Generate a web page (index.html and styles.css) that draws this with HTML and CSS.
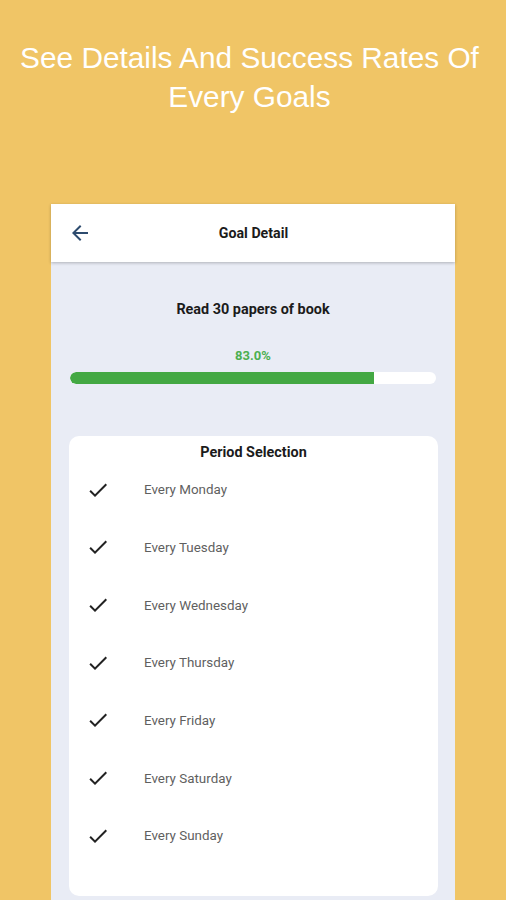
FILE: index.html
```html
<!DOCTYPE html>
<html>
<head>
<meta charset="utf-8">
<link rel="stylesheet" href="styles.css">
</head>
<body>
<div class="page">
  <h1 class="headline">See Details And Success Rates Of<br>Every Goals</h1>
  <div class="phone">
    <div class="appbar">
      <svg class="back" viewBox="0 0 24 24" width="24" height="24"><path d="M20 11H7.83l5.59-5.59L12 4l-8 8 8 8 1.41-1.41L7.83 13H20v-2z"/></svg>
      <div class="appbar-title">Goal Detail</div>
    </div>
    <div class="content">
      <div class="goal-name">Read 30 papers of book</div>
      <div class="percent">83.0%</div>
      <div class="track"><div class="fill" style="width:83%"></div></div>
      <div class="card">
        <div class="card-title">Period Selection</div>
        <div class="row"><svg class="check" viewBox="0 0 24 24" width="24" height="24"><path d="M9 16.17L4.83 12l-1.42 1.41L9 19 21 7l-1.41-1.41z"/></svg><span class="label">Every Monday</span></div>
        <div class="row"><svg class="check" viewBox="0 0 24 24" width="24" height="24"><path d="M9 16.17L4.83 12l-1.42 1.41L9 19 21 7l-1.41-1.41z"/></svg><span class="label">Every Tuesday</span></div>
        <div class="row"><svg class="check" viewBox="0 0 24 24" width="24" height="24"><path d="M9 16.17L4.83 12l-1.42 1.41L9 19 21 7l-1.41-1.41z"/></svg><span class="label">Every Wednesday</span></div>
        <div class="row"><svg class="check" viewBox="0 0 24 24" width="24" height="24"><path d="M9 16.17L4.83 12l-1.42 1.41L9 19 21 7l-1.41-1.41z"/></svg><span class="label">Every Thursday</span></div>
        <div class="row"><svg class="check" viewBox="0 0 24 24" width="24" height="24"><path d="M9 16.17L4.83 12l-1.42 1.41L9 19 21 7l-1.41-1.41z"/></svg><span class="label">Every Friday</span></div>
        <div class="row"><svg class="check" viewBox="0 0 24 24" width="24" height="24"><path d="M9 16.17L4.83 12l-1.42 1.41L9 19 21 7l-1.41-1.41z"/></svg><span class="label">Every Saturday</span></div>
        <div class="row"><svg class="check" viewBox="0 0 24 24" width="24" height="24"><path d="M9 16.17L4.83 12l-1.42 1.41L9 19 21 7l-1.41-1.41z"/></svg><span class="label">Every Sunday</span></div>
      </div>
    </div>
  </div>
</div>
</body>
</html>
```
FILE: styles.css
```css
html, body {
  margin: 0;
  padding: 0;
  background: #f0c566;
}
.page {
  width: 506px;
  height: 900px;
  overflow: hidden;
  display: flex;
  flex-direction: column;
  align-items: center;
}
.headline {
  margin: 38px 0 0 0;
  padding-right: 7px;
  height: 166px;
  font-family: "Liberation Sans", Arial, sans-serif;
  font-weight: normal;
  font-size: 29.8px;
  line-height: 39px;
  color: #ffffff;
  text-align: center;
  white-space: nowrap;
}
.phone {
  width: 404px;
  flex: 1;
  background: #e9ecf5;
  display: flex;
  flex-direction: column;
  font-family: Roboto, "Noto Sans", sans-serif;
}
.appbar {
  height: 58px;
  background: #ffffff;
  display: flex;
  align-items: center;
  box-shadow: 0 1px 3px rgba(0, 0, 0, 0.25);
  position: relative;
  z-index: 1;
}
.back {
  fill: #2d4b6e;
  margin-left: 17px;
  flex: none;
}
.appbar-title {
  flex: 1;
  text-align: center;
  margin-right: 40px;
  font-size: 14.2px;
  font-weight: bold;
  color: #1b1b1b;
}
.content {
  flex: 1;
  display: flex;
  flex-direction: column;
  align-items: center;
  padding: 0 18px 0 18px;
}
.goal-name {
  margin-top: 38px;
  line-height: 19px;
  font-size: 14.4px;
  font-weight: bold;
  color: #1b1b1b;
}
.percent {
  margin-top: 29px;
  line-height: 16px;
  font-size: 13px;
  font-weight: bold;
  color: #4caf50;
}
.track {
  margin-top: 8px;
  width: 366px;
  height: 12px;
  border-radius: 6px;
  background: #ffffff;
  overflow: hidden;
  align-self: flex-start;
  margin-left: 1px;
}
.fill {
  height: 100%;
  background: #43a843;
  border-radius: 6px 0 0 6px;
}
.card {
  margin-top: 52px;
  width: 369px;
  align-self: flex-start;
  background: #ffffff;
  border-radius: 10px;
  padding: 9px 0 31px 0;
}
.card-title {
  text-align: center;
  font-size: 14.4px;
  font-weight: bold;
  line-height: 16px;
  color: #1b1b1b;
}
.row {
  height: 57.67px;
  display: flex;
  align-items: center;
}
.check {
  fill: #222222;
  margin-left: 17px;
  flex: none;
}
.label {
  margin-left: 34px;
  font-size: 13.4px;
  color: #5f5f5f;
}
```
